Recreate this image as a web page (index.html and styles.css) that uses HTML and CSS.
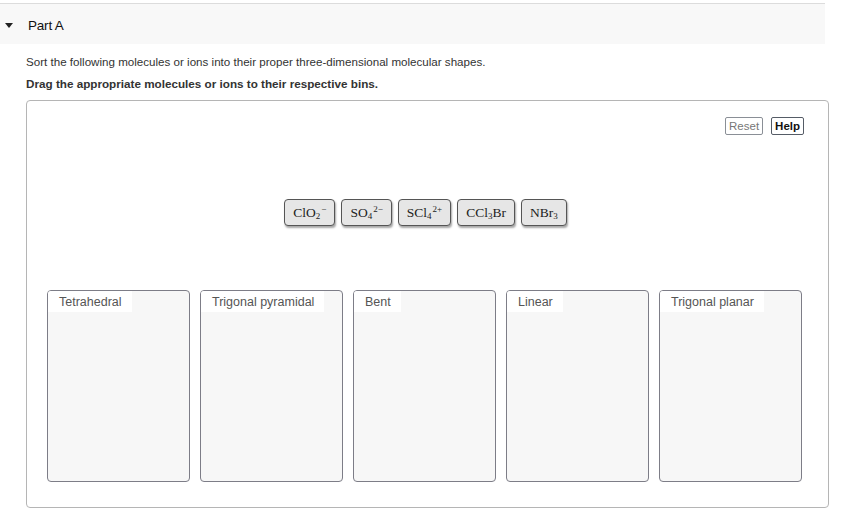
FILE: index.html
```html
<!DOCTYPE html>
<html>
<head>
<meta charset="utf-8">
<link rel="stylesheet" href="styles.css">
</head>
<body>
<div class="part-header">
  <span class="caret"></span>
  <span class="part-title">Part A</span>
</div>
<div class="content">
  <p class="intro">Sort the following molecules or ions into their proper three-dimensional molecular shapes.</p>
  <p class="instr">Drag the appropriate molecules or ions to their respective bins.</p>
  <div class="board">
    <div class="tools">
      <button class="btn reset">Reset</button>
      <button class="btn help">Help</button>
    </div>
    <div class="chips">
      <div class="chip"><span class="f">ClO<sub>2</sub><sup>−</sup></span></div>
      <div class="chip"><span class="f">SO<sub>4</sub><sup>2−</sup></span></div>
      <div class="chip"><span class="f">SCl<sub>4</sub><sup>2+</sup></span></div>
      <div class="chip"><span class="f">CCl<sub>3</sub>Br</span></div>
      <div class="chip"><span class="f">NBr<sub>3</sub></span></div>
    </div>
    <div class="bins">
      <div class="bin"><span class="bin-label">Tetrahedral</span></div>
      <div class="bin"><span class="bin-label">Trigonal pyramidal</span></div>
      <div class="bin"><span class="bin-label">Bent</span></div>
      <div class="bin"><span class="bin-label">Linear</span></div>
      <div class="bin"><span class="bin-label">Trigonal planar</span></div>
    </div>
  </div>
</div>
</body>
</html>
```
FILE: styles.css
```css
html, body {
  margin: 0;
  padding: 0;
  background: #fff;
  font-family: "Liberation Sans", Arial, sans-serif;
  color: #222;
}
.part-header {
  margin-top: 3px;
  width: 825px;
  height: 41px;
  border-top: 1px solid #dcdcdc;
  background: #f8f8f8;
  display: flex;
  align-items: center;
  box-sizing: border-box;
  padding-top: 2px;
}
.caret {
  width: 0;
  height: 0;
  margin-left: 5px;
  border-left: 4px solid transparent;
  border-right: 4px solid transparent;
  border-top: 5px solid #222;
}
.part-title {
  margin-left: 15px;
  font-size: 13.5px;
  color: #111;
  letter-spacing: -0.2px;
}
.content {
  padding-left: 26px;
}
.intro {
  margin: 11px 0 0 0;
  font-size: 11.6px;
  line-height: 14px;
  color: #333;
}
.instr {
  margin: 8px 0 0 0;
  font-size: 11.7px;
  line-height: 14px;
  font-weight: bold;
  color: #333;
}
.board {
  margin-top: 9px;
  width: 803px;
  height: 408px;
  box-sizing: border-box;
  border: 1px solid #b5b5b5;
  border-radius: 4px;
  padding: 16px 0 0 20px;
}
.tools {
  display: flex;
  justify-content: flex-end;
  gap: 8px;
  padding-right: 24px;
}
.btn {
  font-family: "Liberation Sans", Arial, sans-serif;
  font-size: 11.5px;
  line-height: 14px;
  padding: 1px 3px;
  background: #fff;
  border-radius: 2px;
  margin: 0;
}
.reset {
  color: #777;
  border: 1px solid #8a8f96;
}
.help {
  color: #111;
  font-weight: bold;
  border: 1px solid #555c66;
}
.chips {
  margin-top: 64px;
  display: flex;
  justify-content: center;
  gap: 6px;
  padding-right: 24px;
}
.chip {
  font-family: "Liberation Serif", "Times New Roman", serif;
  font-size: 13.5px;
  color: #222;
  background: #e6e6e6;
  border: 1px solid #555;
  border-radius: 4px;
  box-shadow: 1px 2px 2px rgba(0,0,0,0.35);
  height: 27px;
  box-sizing: border-box;
  padding: 0 8px;
  line-height: 25px;
  white-space: nowrap;
}
.f {
  display: inline-block;
  line-height: 25px;
}
.chip sub {
  font-size: 9px;
  vertical-align: -2px;
  line-height: 0;
}
.chip sup {
  font-size: 9px;
  vertical-align: 5px;
  line-height: 0;
  margin-left: 1px;
}
.bins {
  margin-top: 64px;
  width: 755px;
  display: grid;
  grid-template-columns: repeat(5, 1fr);
  gap: 10px;
}
.bin {
  height: 192px;
  box-sizing: border-box;
  border: 1px solid #7d7d87;
  border-radius: 4px;
  background: #f7f7f7;
  display: flex;
  align-items: flex-start;
}
.bin-label {
  background: #fff;
  font-size: 12.5px;
  line-height: 19px;
  padding: 2px 10px 0 11px;
  color: #555;
  border-top-left-radius: 3px;
}
```
